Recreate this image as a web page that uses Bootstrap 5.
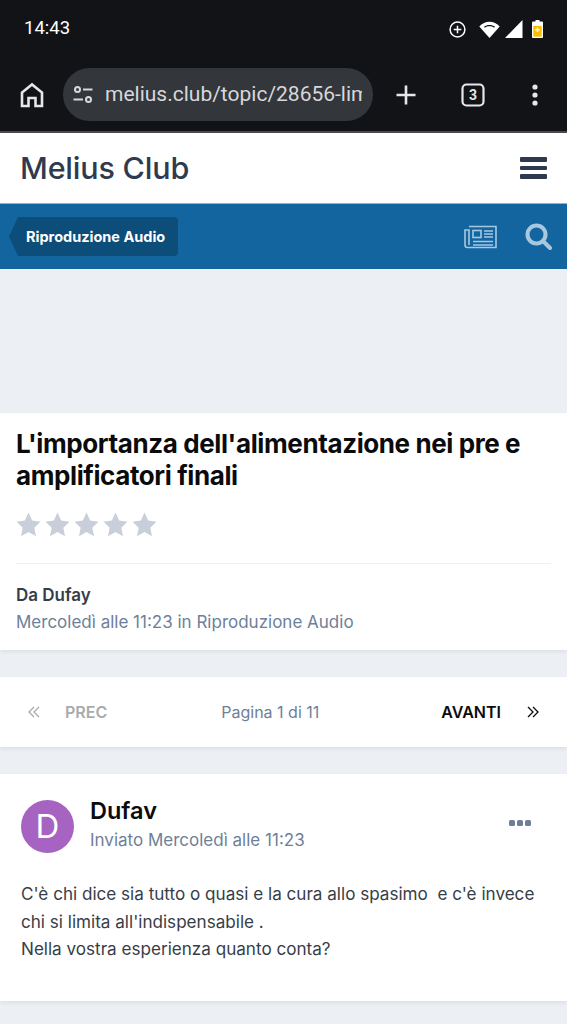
<!DOCTYPE html>
<html lang="it">

<head>
    <meta charset="UTF-8">
    <title>Melius Club</title>
    <link href="https://cdn.jsdelivr.net/npm/bootstrap@5.3.3/dist/css/bootstrap.min.css" rel="stylesheet">
    <style>
        html, body { height: 1024px; overflow: hidden; }
        body { background: #ecf0f5; font-family: Inter, "Liberation Sans", sans-serif; }

        /* barra di stato e chrome */
        .phone-top { background: #121317; color: #fff; height: 133px; border-bottom: 2px solid #4a4b50; }
        .status-row { height: 58px; padding: 0 24px 0 24px; }
        .status-time { font-family: Roboto, sans-serif; font-size: 18.5px; }
        .status-icons svg { display: block; }
        .tool-row { height: 73px; padding: 0 20px; }
        .url-pill { width: 310px; height: 53px; margin-left: 19px; background: #33363b; border-radius: 27px; padding: 0 10px; overflow: hidden; }
        .url-text { font-family: Roboto, sans-serif; font-size: 21px; color: #d6d8dc; white-space: nowrap; overflow: hidden; width: 257px; margin-left: 12px; }
        .tool-plus { margin-left: 21px; }
        .tool-tabs { margin-left: 43px; }
        .tool-more { margin-left: 47px; }

        /* header sito */
        .site-head { height: 70px; background: #fff; padding: 0 20px; }
        .site-name { font-size: 30.5px; font-weight: 500; color: #2f3a4f; letter-spacing: -.2px; }
        .burger { width: 27px; }
        .burger i { display: block; height: 4.5px; background: #2f3a4f; border-radius: 1px; margin: 4px 0; }
        .blue-bar { height: 66px; background: #13659f; border-top: 1px solid #8fb4cf; padding: 0 15px 0 9px; }
        .crumb { background: #0d4d7a; color: #fff; font-size: 14.5px; font-weight: 700; height: 39px; line-height: 39px; padding: 0 13px 0 17px; border-radius: 4px; clip-path: polygon(9px 0, 100% 0, 100% 100%, 9px 100%, 0 50%); }
        .bar-icons { gap: 28px; }
        .ad-gap { height: 144px; }

        /* card */
        .white-box { background: #fff; box-shadow: 0 2px 4px rgba(40, 50, 70, .08); }
        .topic-box { height: 237px; padding: 15px 16px 0; }
        .topic-title { font-size: 26px; line-height: 32px; font-weight: 700; color: #0b0b0c; margin: 0; letter-spacing: -.4px; }
        .stars { margin-top: 20px; gap: 4px; height: 26px; }
        .topic-rule { border-top: 1px solid #eff1f4; margin-top: 25px; }
        .topic-by { font-size: 17px; font-weight: 600; color: #373d47; margin-top: 21px; line-height: 20px; }
        .muted-line { font-size: 17px; color: #6e7f99; line-height: 20px; }
        .topic-box .muted-line { margin-top: 7px; }

        .pager-box { height: 70px; margin-top: 27px; padding: 0 28px; font-size: 16px; }
        .pager-prev { color: #a9abad; font-weight: 600; gap: 25px; }
        .pager-next { color: #0b0b0c; font-weight: 600; gap: 26px; }
        .pager-mid { color: #6e7f99; margin-right: 8px; }

        .post-box { height: 227px; margin-top: 27px; padding: 26px 21px 0; }
        .avatar-d { width: 53px; height: 53px; border-radius: 50%; background: #a763c2; color: #fff; font-size: 33px; line-height: 53px; text-align: center; }
        .post-author { font-size: 23.5px; font-weight: 600; color: #0b0b0c; line-height: 27px; height: 22px; overflow: hidden; margin-top: -3px; }
        .post-meta { margin-left: 16px; }
        .post-meta .muted-line { margin-top: 11px; }
        .dots { gap: 2px; margin-right: 15px; margin-top: 20px; }
        .dots i { width: 6px; height: 6px; background: #6e7f99; border-radius: 1.5px; display: block; }
        .post-text { font-size: 17.1px; line-height: 27.5px; color: #373d47; margin-top: 27px; white-space: pre-wrap; }
    </style>
</head>

<body>

    <!-- barra di stato + browser -->
    <div class="phone-top">
        <div class="status-row d-flex align-items-center justify-content-between">
            <span class="status-time">14:43</span>
            <div class="status-icons d-flex align-items-center">
                <svg width="17" height="17" viewBox="0 0 17 17" fill="none" stroke="#fff" stroke-width="1.500"><circle cx="8.500" cy="8.500" r="7.400"/><path d="M8.500 4.700v7.600M4.700 8.500h7.600"/></svg>
                <svg style="margin-left:13px" width="21" height="17" viewBox="0 0 21 17"><path fill="#fff" d="M10.500 17 .3 5.600C3 2.600 6.500 .8 10.500 .8s7.500 1.800 10.200 4.800z"/><path fill="#121317" d="M5 5.700C6.500 4.600 8.400 4 10.500 4s4 .6 5.500 1.700l-.9 1C13.800 5.800 12.200 5.300 10.500 5.300s-3.300.5-4.600 1.400z"/></svg>
                <svg style="margin-left:5px" width="18" height="18" viewBox="0 0 18 18"><path fill="#fff" d="M17.500 0v18H0z"/></svg>
                <svg style="margin-left:9px" width="11" height="18" viewBox="0 0 11 18"><path fill="#fff" d="M3.500 0h4v1.500H10a1 1 0 0 1 1 1V17a1 1 0 0 1-1 1H1a1 1 0 0 1-1-1V2.500a1 1 0 0 1 1-1h2.500z"/><path fill="#fbbc04" d="M1.300 6h8.400v10.700H1.300z"/><path stroke="#fff" stroke-width="1.400" d="M5.500 7.500v4.600M3.200 9.800h4.600"/></svg>
            </div>
        </div>
        <div class="tool-row d-flex align-items-center">
            <svg width="24" height="26" viewBox="0 0 24 26" fill="none" stroke="#e6e7ea" stroke-width="2.600"><path d="M2 24V10.500L12 2.500l10 8V24h-6.500v-8h-7v8z"/></svg>
            <div class="url-pill d-flex align-items-center">
                <svg class="flex-shrink-0" width="20" height="18" viewBox="0 0 20 18" fill="none" stroke="#d6d8dc" stroke-width="2"><circle cx="4.500" cy="3.500" r="2.500"/><circle cx="15.500" cy="13.500" r="2.500"/><path d="M10 3.500h9.500M.5 13.500H10"/></svg>
                <div class="url-text">melius.club/topic/28656-limportanza</div>
            </div>
            <svg class="tool-plus" width="24" height="24" viewBox="0 0 24 24" stroke="#e6e7ea" stroke-width="2.600"><path d="M12 2.500v19M2.500 12h19"/></svg>
            <svg class="tool-tabs" width="24" height="24" viewBox="0 0 24 24"><rect x="1.500" y="1.500" width="21" height="21" rx="4" fill="none" stroke="#e6e7ea" stroke-width="2.200"/><text x="12" y="17" text-anchor="middle" font-family="Roboto, sans-serif" font-weight="700" font-size="14" fill="#e6e7ea">3</text></svg>
            <svg class="tool-more" width="6" height="22" viewBox="0 0 6 22" fill="#e6e7ea"><circle cx="3" cy="3" r="2.600"/><circle cx="3" cy="11" r="2.600"/><circle cx="3" cy="19" r="2.600"/></svg>
        </div>
    </div>

    <!-- header -->
    <div class="site-head d-flex align-items-center justify-content-between">
        <span class="site-name">Melius Club</span>
        <div class="burger"><i></i><i></i><i></i></div>
    </div>
    <div class="blue-bar d-flex align-items-center justify-content-between">
        <span class="crumb">Riproduzione Audio</span>
        <div class="bar-icons d-flex align-items-center">
            <svg width="33" height="24" viewBox="0 0 33 24" fill="none" stroke="#a8c8e0" stroke-width="1.600"><path d="M5 1.500h27v21H3.500A2.500 2.500 0 0 1 1 20V5h4v15"/><rect x="9" y="5.500" width="8" height="7"/><path d="M20 6h9M20 9h9M20 12h9M9 16.500h20M9 20h20"/></svg>
            <svg width="27" height="27" viewBox="0 0 27 27" fill="none" stroke="#a8c8e0" stroke-width="4"><circle cx="11.500" cy="11.500" r="9"/><path d="M18 18l7 7" stroke-linecap="round"/></svg>
        </div>
    </div>

    <div class="ad-gap"></div>

    <!-- titolo discussione -->
    <div class="white-box topic-box">
        <h1 class="topic-title">L'importanza dell'alimentazione nei pre e amplificatori finali</h1>
        <div class="stars d-flex">
            <svg width="25" height="25" viewBox="0 0 24 23" preserveAspectRatio="none"><path fill="#c8cfda" d="M12 .5l3.500 7.400 8 1-5.900 5.500 1.600 8L12 18.500 4.800 22.400l1.600-8L.5 8.900l8-1z"/></svg>
            <svg width="25" height="25" viewBox="0 0 24 23" preserveAspectRatio="none"><path fill="#c8cfda" d="M12 .5l3.500 7.400 8 1-5.900 5.500 1.600 8L12 18.500 4.800 22.400l1.600-8L.5 8.900l8-1z"/></svg>
            <svg width="25" height="25" viewBox="0 0 24 23" preserveAspectRatio="none"><path fill="#c8cfda" d="M12 .5l3.500 7.400 8 1-5.900 5.500 1.600 8L12 18.500 4.800 22.400l1.600-8L.5 8.900l8-1z"/></svg>
            <svg width="25" height="25" viewBox="0 0 24 23" preserveAspectRatio="none"><path fill="#c8cfda" d="M12 .5l3.500 7.400 8 1-5.900 5.500 1.600 8L12 18.500 4.800 22.400l1.600-8L.5 8.900l8-1z"/></svg>
            <svg width="25" height="25" viewBox="0 0 24 23" preserveAspectRatio="none"><path fill="#c8cfda" d="M12 .5l3.500 7.400 8 1-5.900 5.500 1.600 8L12 18.500 4.800 22.400l1.600-8L.5 8.900l8-1z"/></svg>
        </div>
        <div class="topic-rule"></div>
        <div class="topic-by">Da Dufay</div>
        <div class="muted-line">Mercoledì alle 11:23 in Riproduzione Audio</div>
    </div>

    <!-- paginazione -->
    <div class="white-box pager-box d-flex align-items-center justify-content-between">
        <div class="pager-prev d-flex align-items-center">
            <svg width="12" height="12" viewBox="0 0 12 12" fill="none" stroke="#a9abad" stroke-width="1.300"><path d="M6 1 1 6l5 5M11 1 6 6l5 5"/></svg>
            <span>PREC</span>
        </div>
        <div class="pager-mid">Pagina 1 di 11</div>
        <div class="pager-next d-flex align-items-center">
            <span>AVANTI</span>
            <svg width="12" height="12" viewBox="0 0 12 12" fill="none" stroke="#0b0b0c" stroke-width="1.300"><path d="M1 1l5 5-5 5M6 1l5 5-5 5"/></svg>
        </div>
    </div>

    <!-- post -->
    <div class="white-box post-box">
        <div class="d-flex">
            <div class="avatar-d flex-shrink-0">D</div>
            <div class="post-meta flex-grow-1">
                <div class="post-author">Dufay</div>
                <div class="muted-line">Inviato Mercoledì alle 11:23</div>
            </div>
            <div class="dots d-flex align-items-start"><i></i><i></i><i></i></div>
        </div>
        <div class="post-text">C'è chi dice sia tutto o quasi e la cura allo spasimo  e c'è invece
chi si limita all'indispensabile .
Nella vostra esperienza quanto conta?</div>
    </div>

    <script src="https://cdn.jsdelivr.net/npm/bootstrap@5.3.3/dist/js/bootstrap.bundle.min.js"></script>
</body>

</html>
